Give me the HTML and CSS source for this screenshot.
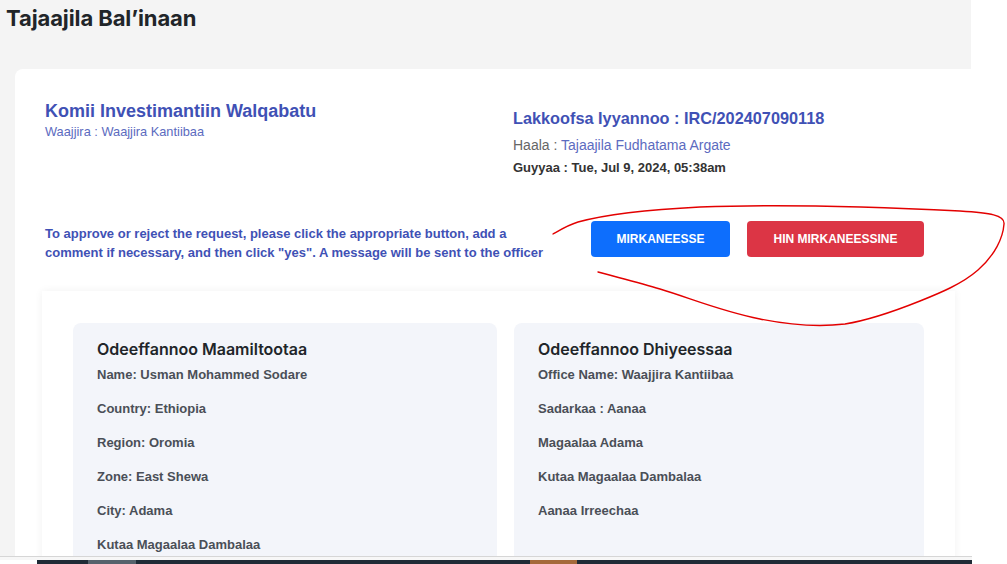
FILE: index.html
```html
<!DOCTYPE html>
<html lang="om">
<head>
<meta charset="utf-8">
<title>Tajaajila Bal'inaan</title>
<link rel="stylesheet" href="styles.css">
</head>
<body>
<div class="screen">
  <div class="page">
    <h1 class="page-title">Tajaajila Bal’inaan</h1>
    <div class="card">
      <div class="card-head">
        <div class="head-left">
          <h2 class="org-name">Komii Investimantiin Walqabatu</h2>
          <p class="org-office">Waajjira : Waajjira Kantiibaa</p>
        </div>
        <div class="head-right">
          <h3 class="req-no">Lakkoofsa Iyyannoo : IRC/202407090118</h3>
          <p class="req-status"><span class="muted">Haala :</span> Tajaajila Fudhatama Argate</p>
          <p class="req-date">Guyyaa : Tue, Jul 9, 2024, 05:38am</p>
        </div>
      </div>
      <div class="actions">
        <p class="instructions">To approve or reject the request, please click the appropriate button, add a comment if necessary, and then click "yes". A message will be sent to the officer</p>
        <div class="buttons">
          <button class="btn btn-approve">MIRKANEESSE</button>
          <button class="btn btn-reject">HIN MIRKANEESSINE</button>
        </div>
      </div>
      <div class="details">
        <div class="panel panel-left">
          <h4 class="panel-title">Odeeffannoo Maamiltootaa</h4>
          <p class="item">Name: Usman Mohammed Sodare</p>
          <p class="item">Country: Ethiopia</p>
          <p class="item">Region: Oromia</p>
          <p class="item">Zone: East Shewa</p>
          <p class="item">City: Adama</p>
          <p class="item">Kutaa Magaalaa Dambalaa</p>
        </div>
        <div class="panel panel-right">
          <h4 class="panel-title">Odeeffannoo Dhiyeessaa</h4>
          <p class="item">Office Name: Waajjira Kantiibaa</p>
          <p class="item">Sadarkaa : Aanaa</p>
          <p class="item">Magaalaa Adama</p>
          <p class="item">Kutaa Magaalaa Dambalaa</p>
          <p class="item">Aanaa Irreechaa</p>
        </div>
      </div>
    </div>
  </div>
</div>
<div class="scroll-edge"></div>
<div class="taskbar-gap"></div>
<div class="taskbar">
  <span class="tb-seg tb-grey"></span>
  <span class="tb-seg tb-orange"></span>
</div>
<svg class="annotation" width="1007" height="564" viewBox="0 0 1007 564" aria-hidden="true">
  <path d="M553,234 C560,230 568,225 578,222 C600,216 640,210 700,207 C780,204 880,207 960,211 C990,213 1005,215 1004,224 C1003,238 995,255 978,270 C962,284 940,293 920,301 C895,311 870,320 845,324 C820,327 790,325 760,319 C720,311 690,298 660,289 C640,283 620,278 598,272" fill="none" stroke="#e30000" stroke-width="1.4" stroke-linecap="round"/>
</svg>
</body>
</html>
```
FILE: styles.css
```css
* { box-sizing: border-box; }
html, body { margin: 0; padding: 0; }
body {
  width: 1007px;
  height: 564px;
  overflow: hidden;
  background: #ffffff;
  font-family: "Liberation Sans", Arial, sans-serif;
  position: relative;
}
.screen {
  height: 556px;
  overflow: hidden;
}
.page {
  width: 971px;
  height: 556px;
  background: #f4f4f4;
  overflow: hidden;
}
.page-title {
  margin: 0;
  padding: 4px 6px 0;
  height: 69px;
  font-family: Inter, "Open Sans", sans-serif;
  font-weight: 700;
  font-size: 22px;
  line-height: 28px;
  color: #212529;
  letter-spacing: -0.1px;
}
.card {
  margin-left: 15px;
  width: 990px;
  background: #ffffff;
  border-radius: 8px 0 0 0;
  padding: 31px 0 0 30px;
  min-height: 600px;
}
.card-head {
  display: grid;
  grid-template-columns: 468px 1fr;
}
.org-name {
  margin: 0;
  font-size: 18px;
  line-height: 22px;
  font-weight: 700;
  color: #3f51b5;
}
.org-office {
  margin: 3px 0 0;
  font-size: 12.8px;
  line-height: 14px;
  color: #5c6bc0;
}
.head-right { padding-top: 8px; }
.req-no {
  margin: 0;
  font-size: 16.3px;
  line-height: 20px;
  font-weight: 700;
  color: #3f51b5;
}
.req-status {
  margin: 9px 0 0;
  font-size: 14px;
  line-height: 17px;
  color: #5c6bc0;
}
.muted { color: #666666; }
.req-date {
  margin: 6px 0 0;
  font-size: 13px;
  line-height: 16px;
  font-weight: 700;
  color: #333333;
}
.actions {
  display: grid;
  grid-template-columns: 546px auto;
  align-items: center;
  margin-top: 39px;
}
.instructions {
  margin: 9px 0 0;
  width: 510px;
  font-size: 13px;
  line-height: 19px;
  font-weight: 700;
  color: #3f51b5;
}
.buttons {
  display: flex;
  gap: 17px;
}
.btn {
  height: 36px;
  border: none;
  border-radius: 4px;
  font-family: "Liberation Sans", Arial, sans-serif;
  font-weight: 700;
  font-size: 12px;
  color: #ffffff;
  padding: 0;
}
.btn-approve { width: 139px; background: #0d6efd; }
.btn-reject { width: 177px; background: #dc3545; }
.details {
  margin: 29px 0 0 -3px;
  width: 913px;
  background: #ffffff;
  box-shadow: 0 0 8px rgba(0, 0, 0, 0.06);
  padding: 32px 31px 40px;
  display: grid;
  grid-template-columns: 424px 410px;
  gap: 17px;
}
.panel {
  background: #f3f5fa;
  border-radius: 8px;
  padding: 16px 24px 30px;
  min-height: 260px;
}
.panel-title {
  margin: 0 0 6px;
  font-family: Inter, "Open Sans", sans-serif;
  font-weight: 600;
  font-size: 16px;
  line-height: 20px;
  color: #212529;
}
.item {
  margin: 0 0 14px;
  font-size: 13px;
  line-height: 20px;
  color: #4a4f57;
  font-weight: 700;
}
.scroll-edge {
  width: 972px;
  height: 1px;
  background: #d6d6d6;
}
.taskbar-gap {
  height: 3px;
  width: 972px;
  background: #f7f7f7;
}
.taskbar {
  margin-left: 37px;
  width: 935px;
  height: 4px;
  background: #1f2b36;
  display: flex;
}
.tb-seg { display: block; height: 4px; }
.tb-grey { margin-left: 51px; width: 48px; background: #56626c; }
.tb-orange { margin-left: 394px; width: 47px; background: #a5693a; }
.annotation {
  position: absolute;
  left: 0;
  top: 0;
  pointer-events: none;
}
```
